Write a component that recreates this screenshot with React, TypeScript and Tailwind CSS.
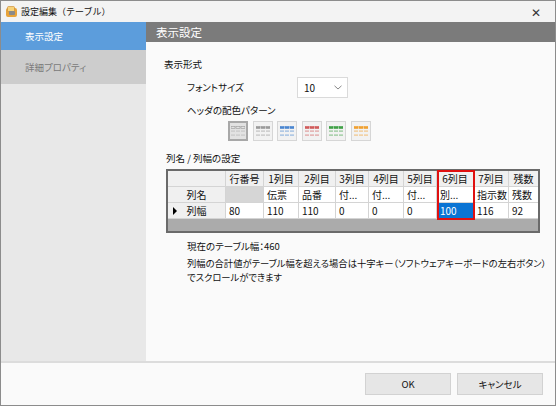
import React from 'react';

const font = { fontFamily: '"Noto Sans CJK JP", "Noto Sans", sans-serif', fontFeatureSettings: '"palt"' };

const cols = ['w-[58px]', 'w-[38px]', 'w-[35px]', 'w-[37px]', 'w-[33px]', 'w-[35px]', 'w-[33px]', 'w-[37px]', 'w-[35px]', 'w-[29px]'];

const headers = ['', '行番号', '1列目', '2列目', '3列目', '4列目', '5列目', '6列目', '7列目', '残数'];
const names = ['列名', '', '伝票', '品番', '付...', '付...', '付...', '別...', '指示数', '残数'];
const widths = ['列幅', '80', '110', '110', '0', '0', '0', '100', '116', '92'];

function PatternIcon({ color, selected }: { color: string; selected?: boolean }) {
  return (
    <div
      className={
        selected
          ? 'w-[20px] h-[20px] border-2 border-[#a8a8a8] bg-[#e2e2e2] flex items-center justify-center'
          : 'w-[20px] h-[20px] border border-[#d6d6d6] bg-[#f2f2f2] flex items-center justify-center'
      }
    >
      <svg width="14" height="11" viewBox="0 0 14 11">
        {[0, 5, 10].map((x) => (
          <g key={x}>
            <rect x={x} y={0.5} width={4} height={2} fill={selected ? 'none' : color} stroke={selected ? '#9a9a9a' : color} strokeWidth={0.6} />
            <rect x={x} y={4.5} width={4} height={1.2} fill={selected ? '#b0b0b0' : color} opacity={0.55} />
            <rect x={x} y={8.5} width={4} height={1.2} fill={selected ? '#b0b0b0' : color} opacity={0.55} />
          </g>
        ))}
      </svg>
    </div>
  );
}

function Row({ cells, kind }: { cells: string[]; kind: 'head' | 'name' | 'width' }) {
  return (
    <div className="flex h-[16px]">
      {cells.map((c, i) => {
        let cls = 'border-b border-[#d4d4d4] text-[10px] leading-[15px] overflow-hidden whitespace-nowrap ';
        cls += i === 9 ? '' : 'border-r ';
        if (kind === 'head') cls += 'bg-[#f0f0f0] text-center';
        else if (i === 0) cls += 'bg-[#f0f0f0] text-center relative';
        else if (kind === 'name' && i === 1) cls += 'bg-[#d6d6d6]';
        else if (kind === 'width' && i === 7) cls += 'bg-[#0a74d4] text-white pl-[3px]';
        else cls += 'bg-white pl-[3px]';
        return (
          <div key={i} className={cls + ' ' + cols[i]}>
            {kind === 'width' && i === 0 && (
              <span className="absolute left-[5px] top-[4px] w-0 h-0 border-y-[4px] border-y-transparent border-l-[4px] border-l-black" />
            )}
            {c}
          </div>
        );
      })}
    </div>
  );
}

export default function App() {
  return (
    <div className="w-[556px] h-[406px] bg-[#fafafa] border border-[#8c8c8c] flex flex-col text-[#111]" style={font}>
      {/* title bar */}
      <div className="h-[21px] bg-[#f3f3f3] flex items-center pl-[4px] pr-[14px] shrink-0">
        <svg width="13" height="12" viewBox="0 0 13 12">
          <rect x="1" y="2" width="11" height="9" rx="2" fill="#e8a33a" />
          <rect x="2.5" y="0.5" width="7" height="5" rx="1" fill="#f7d37a" stroke="#c9842a" strokeWidth="0.6" />
          <rect x="4" y="5" width="6" height="4" rx="1" fill="#8a8a8a" />
        </svg>
        <span className="ml-[3px] text-[9px] [font-feature-settings:normal]">設定編集（テーブル）</span>
        <span className="ml-auto text-[12px] leading-none text-[#333]">✕</span>
      </div>

      <div className="flex flex-1 min-h-0">
        {/* sidebar */}
        <div className="w-[145px] bg-[#e8e8e8] flex flex-col shrink-0">
          <div className="h-[28px] bg-[#5c9ddc] text-white text-[9.5px] flex items-center pl-[24px]">表示設定</div>
          <div className="h-[34px] bg-[#cdcdcd] text-[#7a7a7a] text-[9.5px] flex items-center pl-[24px]">詳細プロパティ</div>
        </div>

        {/* main */}
        <div className="flex-1 flex flex-col bg-[#fafafa]">
          <div className="h-[20px] bg-[#7b7b7b] text-white text-[11.5px] leading-[20px] pl-[10px]">表示設定</div>
          <div className="pl-[18px] flex flex-col">
            <div className="mt-[14px] text-[9.5px] leading-[16px]">表示形式</div>
            <div className="mt-[5px] ml-[23px] flex items-center h-[21px]">
              <span className="w-[110px] text-[9.5px]">フォントサイズ</span>
              <div className="w-[51px] h-[21px] bg-white border border-[#dadada] flex items-center pl-[6px] pr-[5px] text-[10px]">
                <span>10</span>
                <svg className="ml-auto" width="8" height="5" viewBox="0 0 8 5">
                  <path d="M0.5 0.8 L4 4 L7.5 0.8" fill="none" stroke="#888" strokeWidth="1" />
                </svg>
              </div>
            </div>
            <div className="mt-[4px] ml-[23px] text-[9.5px] leading-[16px]">ヘッダの配色パターン</div>
            <div className="mt-[3px] ml-[64px] flex gap-[4.5px]">
              <PatternIcon color="#999" selected />
              <PatternIcon color="#9a9a9a" />
              <PatternIcon color="#4a86d0" />
              <PatternIcon color="#d05a5a" />
              <PatternIcon color="#3fa046" />
              <PatternIcon color="#f0a030" />
            </div>
            <div className="mt-[9px] ml-[2px] text-[9.5px] leading-[16px]">列名 / 列幅の設定</div>
            <div className="mt-[3px] ml-[2px] w-[374px] border-2 border-[#6a6a6a] relative">
              <Row cells={headers} kind="head" />
              <Row cells={names} kind="name" />
              <Row cells={widths} kind="width" />
              <div className="h-[12px] bg-[#ababab]" />
              <div className="absolute left-[269px] top-[-1px] w-[38px] h-[50px] border-2 border-[#e01010]" />
            </div>
            <div className="mt-[5px] ml-[23px] text-[9.5px] leading-[16px]">現在のテーブル幅：460</div>
            <div className="mt-[2px] ml-[23px] text-[9.3px] leading-[14px] whitespace-nowrap">
              列幅の合計値がテーブル幅を超える場合は十字キー（ソフトウェアキーボードの左右ボタン）
              <br />
              でスクロールができます
            </div>
          </div>
        </div>
      </div>

      {/* footer */}
      <div className="h-[44px] border-t-2 border-[#dcdcdc] bg-[#fafafa] flex items-center justify-end gap-[6px] pr-[12px] shrink-0">
        <button className="w-[86px] h-[22px] bg-[#e6e6e6] border border-[#d2d2d2] text-[9.5px]">OK</button>
        <button className="w-[86px] h-[22px] bg-[#e6e6e6] border border-[#d2d2d2] text-[9.5px]">キャンセル</button>
      </div>
    </div>
  );
}
